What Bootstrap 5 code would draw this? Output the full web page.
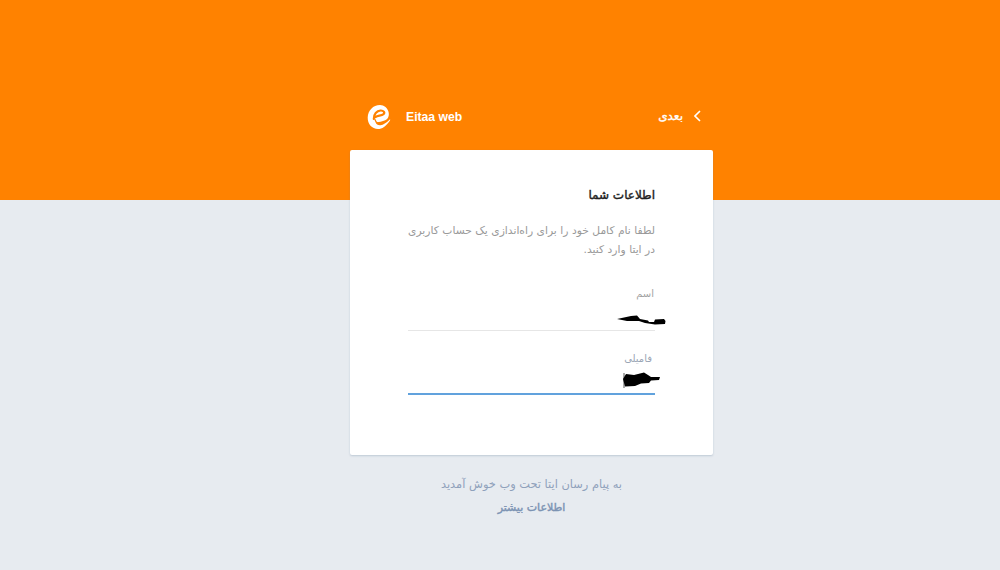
<!DOCTYPE html>
<html lang="fa">
<head>
<meta charset="utf-8">
<title>Eitaa web</title>
<link href="https://cdn.jsdelivr.net/npm/bootstrap@5.3.0/dist/css/bootstrap.min.css" rel="stylesheet">
<style>
html, body { height: 100%; }
body {
  background: linear-gradient(#ff8200 200px, #e7ebf0 200px);
  font-family: "DejaVu Sans", "Noto Sans", sans-serif;
  overflow: hidden;
}
.shell { width: 363px; margin-left: 350px; padding-top: 100px; }
.topbar { height: 50px; padding: 2px 58px 18px 17px; color: #fff; }
.brand-name { font-family: "Liberation Sans", sans-serif; font-size: 12.2px; font-weight: 700; margin-left: 15px; }
.next-link { color: #fff; font-size: 12px; font-weight: 400; -webkit-text-stroke: .35px #fff; text-decoration: none; gap: 11px; margin-right: -46px; margin-top: -3px; }
.sheet { height: 305px; background: #fff; border-radius: 2px; box-shadow: 0 1px 2px rgba(97,127,152,.3); padding: 36px 58px 0; }
.sheet-title { font-size: 12px; font-weight: 400; -webkit-text-stroke: .4px #222; color: #222; margin: 0 0 18px; line-height: 18px; }
.sheet-text { font-size: 10.7px; word-spacing: .1px; line-height: 18.500px; color: #999; margin: 0 0 28px; }
.field { position: relative; margin-bottom: 21px; }
.field label { display: block; font-size: 10px; line-height: 14px; color: #a3a3a3; padding-right: 1px; margin: 0; }
.field-second label { color: #9aa5b5; padding-right: 3px; }
.field .form-control { height: 30px; border: 0; border-bottom: 1px solid #e6e6e6; border-radius: 0; padding: 0; box-shadow: none; background: transparent; }
.field-second .form-control { height: 29px; border-bottom: 2px solid #61a2dd; }
.scribble { position: absolute; }
.scribble-one { left: 209px; top: 27px; width: 50px; height: 12px; }
.scribble-two { left: 214px; top: 20px; width: 40px; height: 18px; }
.below { text-align: center; font-size: 11.4px; color: #8fa1bb; padding-top: 20px; }
.below p { margin: 0 0 4px; line-height: 19px; }
.more-link { color: #7c93b3; font-weight: 400; -webkit-text-stroke: .4px #7c93b3; font-size: 11px; text-decoration: none; line-height: 19px; }
</style>
</head>
<body>
<div class="shell">
  <div class="topbar d-flex justify-content-between align-items-center">
    <div class="d-flex align-items-center">
      <svg width="24" height="26" viewBox="0 0 24 26" aria-hidden="true">
        <path fill="#fff" d="M13 1C6 1 1 6.500 .7 13.500.5 20 5 25 11 25c4 0 8-2.500 12-8.500.5-.8 0-1.200-.7-.6-3 2.800-6 5-8.800 5.300-2.500.2-4.300-1-5-3 4.500 0 9.500-1 12-3.700C23 11.500 22 6 18.500 3 17 1.700 15 1 13 1z"/>
        <path fill="none" stroke="#ff8200" stroke-width="2.200" stroke-linecap="round" d="M6.800 15C6.500 10 10 6.800 13.500 6.500c3-.2 4.800 2 3 3.600-2 1.700-5.500 1.400-8 2.900"/>
        <path fill="none" stroke="#ff8200" stroke-width="1.200" stroke-linecap="round" d="M8 15.500c.5 2 1.500 3 2.500 3.500"/>
      </svg>
      <span class="brand-name">Eitaa web</span>
    </div>
    <a href="#" class="next-link d-flex align-items-center" dir="rtl">
      <svg width="7" height="12" viewBox="0 0 7 12" aria-hidden="true"><path d="M1 1l5 5-5 5" transform="matrix(-1 0 0 1 7 0)" fill="none" stroke="#fff" stroke-width="1.600"/></svg>
      <span>بعدی</span>
    </a>
  </div>
  <div class="sheet" dir="rtl">
    <h1 class="sheet-title">اطلاعات شما</h1>
    <p class="sheet-text">لطفا نام کامل خود را برای راه‌اندازی یک حساب کاربری در ایتا وارد کنید.</p>
    <div class="field" dir="ltr">
      <label dir="rtl" for="first">اسم</label>
      <input id="first" class="form-control" type="text" dir="rtl">
      <svg class="scribble scribble-one" viewBox="0 0 50 12" aria-hidden="true"><path d="M0 5 14 2 20 1.500 23 5 31 6.500 32 8 37 8 38 5.500 47 5 48.500 7 48 10 38 10.500 28 9 22 7 10 7z" fill="#000"/></svg>
    </div>
    <div class="field field-second" dir="ltr">
      <label dir="rtl" for="last">فامیلی</label>
      <input id="last" class="form-control" type="text" dir="rtl">
      <svg class="scribble scribble-two" viewBox="0 0 40 18" aria-hidden="true"><path d="M2 1V16" stroke="#555" stroke-width="1"/><path d="M1 7 4 2 12 3 22 .5 26 3 29 5 38 5 37 8 29 8.500 27 11 19 11.500 13 14 3 14.500z" fill="#000"/></svg>
    </div>
  </div>
  <div class="below" dir="rtl">
    <p>به پیام رسان ایتا تحت وب خوش آمدید</p>
    <a href="#" class="more-link">اطلاعات بیشتر</a>
  </div>
</div>
<script src="https://cdn.jsdelivr.net/npm/bootstrap@5.3.0/dist/js/bootstrap.bundle.min.js"></script>
</body>
</html>
